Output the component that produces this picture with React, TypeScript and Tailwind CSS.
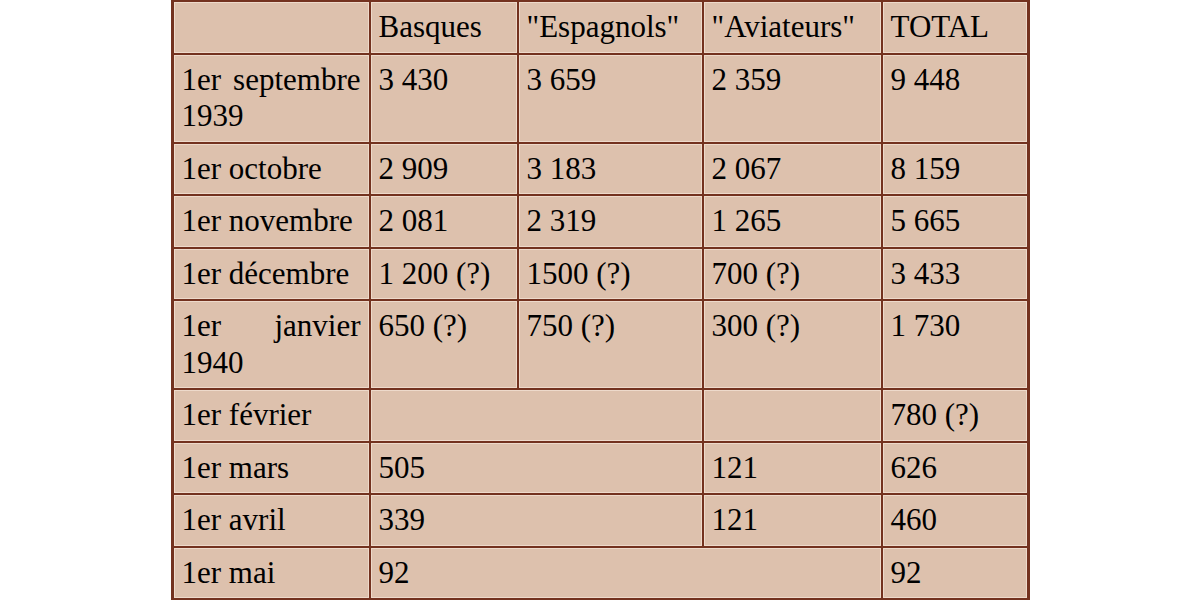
const headers = ["", "Basques", "\"Espagnols\"", "\"Aviateurs\"", "TOTAL"];

type Cell = { text: string; span?: number };

const rows: Cell[][] = [
  [{ text: "1er septembre 1939" }, { text: "3 430" }, { text: "3 659" }, { text: "2 359" }, { text: "9 448" }],
  [{ text: "1er octobre" }, { text: "2 909" }, { text: "3 183" }, { text: "2 067" }, { text: "8 159" }],
  [{ text: "1er novembre" }, { text: "2 081" }, { text: "2 319" }, { text: "1 265" }, { text: "5 665" }],
  [{ text: "1er décembre" }, { text: "1 200 (?)" }, { text: "1500 (?)" }, { text: "700 (?)" }, { text: "3 433" }],
  [{ text: "1er janvier 1940" }, { text: "650 (?)" }, { text: "750 (?)" }, { text: "300 (?)" }, { text: "1 730" }],
  [{ text: "1er février" }, { text: "", span: 2 }, { text: "" }, { text: "780 (?)" }],
  [{ text: "1er mars" }, { text: "505", span: 2 }, { text: "121" }, { text: "626" }],
  [{ text: "1er avril" }, { text: "339", span: 2 }, { text: "121" }, { text: "460" }],
  [{ text: "1er mai" }, { text: "92", span: 3 }, { text: "92" }],
];

const cellClass =
  "border border-[#73321f] px-2 py-[7px] align-top leading-[36.5px] shadow-[inset_0_0_0_1px_#eedacb]";

export default function App() {
  return (
    <div className="min-h-screen bg-white flex justify-center">
      <table
        className="table-fixed border-separate border-spacing-0 border-x-2 border-y border-[#73321f] bg-[#ddc1ad] text-[31px] text-black w-[855px]"
        style={{ fontFamily: '"Liberation Serif", "Times New Roman", serif' }}
      >
        <colgroup>
          <col className="w-[197px]" />
          <col className="w-[148px]" />
          <col className="w-[185px]" />
          <col className="w-[179px]" />
          <col className="w-[146px]" />
        </colgroup>
        <thead>
          <tr>
            {headers.map((h, i) => (
              <td key={i} className={`${cellClass} text-left`}>
                {h}
              </td>
            ))}
          </tr>
        </thead>
        <tbody>
          {rows.map((row, r) => (
            <tr key={r}>
              {row.map((cell, c) => (
                <td
                  key={c}
                  colSpan={cell.span}
                  className={`${cellClass} ${c === 0 ? "text-justify" : "text-left"}`}
                >
                  {cell.text}
                </td>
              ))}
            </tr>
          ))}
        </tbody>
      </table>
    </div>
  );
}
